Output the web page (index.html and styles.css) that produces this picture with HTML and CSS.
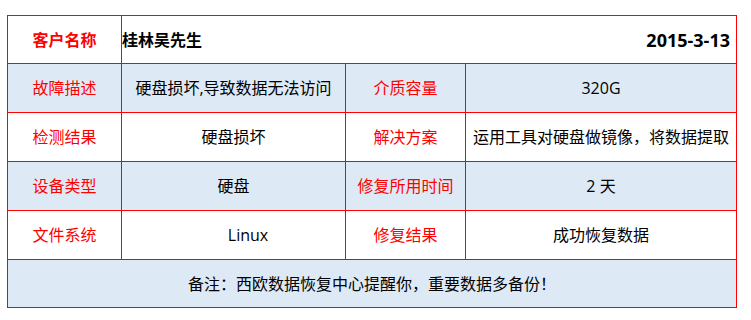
FILE: index.html
```html
<!DOCTYPE html>
<html lang="zh-CN">
<head>
<meta charset="utf-8">
<title>数据恢复案例</title>
<link rel="stylesheet" href="styles.css">
</head>
<body>
<div class="sheet">
  <div class="cell label strong">客户名称</div>
  <div class="cell head span3"><span>桂林吴先生</span><span class="date">2015-3-13</span></div>

  <div class="cell label alt">故障描述</div>
  <div class="cell alt">硬盘损坏,导致数据无法访问</div>
  <div class="cell label alt">介质容量</div>
  <div class="cell alt">320G</div>

  <div class="cell label">检测结果</div>
  <div class="cell">硬盘损坏</div>
  <div class="cell label">解决方案</div>
  <div class="cell">运用工具对硬盘做镜像，将数据提取</div>

  <div class="cell label alt">设备类型</div>
  <div class="cell alt">硬盘</div>
  <div class="cell label alt">修复所用时间</div>
  <div class="cell alt">2 天</div>

  <div class="cell label">文件系统</div>
  <div class="cell indent">Linux</div>
  <div class="cell label">修复结果</div>
  <div class="cell">成功恢复数据</div>

  <div class="cell alt span4">备注：西欧数据恢复中心提醒你，重要数据多备份！</div>
</div>
</body>
</html>
```
FILE: styles.css
```css
html, body {
  margin: 0;
  padding: 0;
  background: #ffffff;
}
body {
  font-family: "Open Sans", "Noto Sans CJK SC", sans-serif;
  font-size: 16px;
  color: #000000;
}
.sheet {
  margin: 15px 0 0 7px;
  width: 728px;
  padding: 1px;
  background: #ff0000;
  display: grid;
  grid-template-columns: 113px 223px 119px 270px;
  grid-template-rows: 47px 48px 48px 48px 48px 47px;
  gap: 1px;
}
.cell {
  background: #ffffff;
  display: flex;
  align-items: center;
  justify-content: center;
  white-space: nowrap;
  line-height: 1;
}
.cell.alt {
  background: #ddeaf6;
}
.label {
  color: #ff0000;
}
.strong {
  font-weight: bold;
}
.head {
  justify-content: space-between;
  font-weight: bold;
  padding: 0 6px 0 0;
}
.date {
  font-size: 18px;
}
.indent {
  padding-left: 29px;
}
.span3 {
  grid-column: span 3;
}
.span4 {
  grid-column: span 4;
}
```
